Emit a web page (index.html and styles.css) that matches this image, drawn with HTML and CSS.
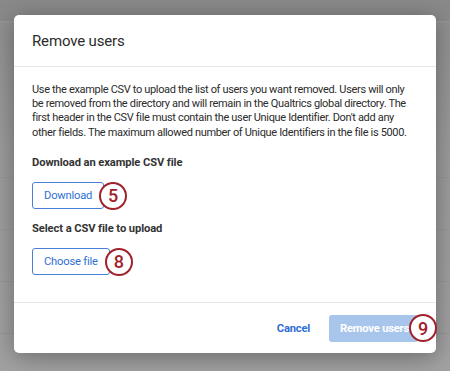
FILE: index.html
```html
<!DOCTYPE html>
<html lang="en">
<head>
    <meta charset="UTF-8">
    <meta name="viewport" content="width=device-width, initial-scale=1.0">
    <title>Remove users</title>
    <link rel="stylesheet" href="styles.css">
</head>
<body>
    <!-- Page behind the dialog -->
    <div class="backdrop">
        <div class="bg-row bg-row-top"></div>
        <div class="bg-row"></div>
        <div class="bg-row"></div>
        <div class="bg-row"></div>
        <div class="bg-row"></div>
        <div class="bg-row"></div>
        <div class="bg-row"></div>
    </div>

    <div class="overlay">
        <div class="modal">
            <div class="modal-header">
                <h1>Remove users</h1>
            </div>

            <div class="modal-body">
                <p class="intro">Use the example CSV to upload the list of users you want removed. Users will only be removed from the directory and will remain in the Qualtrics global directory. The first header in the CSV file must contain the user Unique Identifier. Don't add any other fields. The maximum allowed number of Unique Identifiers in the file is 5000.</p>

                <h2>Download an example CSV file</h2>
                <div class="action-row">
                    <button class="btn btn-outline">Download</button>
                    <span class="step">5</span>
                </div>

                <h2>Select a CSV file to upload</h2>
                <div class="action-row">
                    <button class="btn btn-outline">Choose file</button>
                    <span class="step">8</span>
                </div>
            </div>

            <div class="modal-footer">
                <button class="btn btn-link">Cancel</button>
                <div class="action-row">
                    <button class="btn btn-primary" disabled>Remove users</button>
                    <span class="step">9</span>
                </div>
            </div>
        </div>
    </div>
</body>
</html>
```

FILE: styles.css
```css
:root {
    --blue: #2f6fd6;
    --blue-border: #4a80dc;
    --blue-disabled: #a8c5ec;
    --step-red: #a1212b;
    --text: #2b2b2b;
    --divider: #e6e6e6;
}

* {
    box-sizing: border-box;
    margin: 0;
    padding: 0;
}

body {
    font-family: Roboto, 'Liberation Sans', sans-serif;
    width: 450px;
    height: 371px;
    overflow: hidden;
    position: relative;
    background-color: #a2a2a2;
}

.backdrop {
    display: flex;
    flex-direction: column;
    height: 100%;
    background: linear-gradient(to bottom, #8f8f8f 0%, #9c9c9c 40%, #a2a2a2 100%);
}

.bg-row {
    height: 52px;
    border-bottom: 1px solid #989898;
    flex-shrink: 0;
}

.bg-row-top {
    height: 22px;
    background-color: #8a8a8a;
}

.overlay {
    position: absolute;
    inset: 0;
    padding: 15px 14px 18px 14px;
}

.modal {
    background-color: #fff;
    border-radius: 5px;
    height: 338px;
    display: flex;
    flex-direction: column;
    box-shadow: 0 4px 24px rgba(0, 0, 0, 0.35);
}

.modal-header {
    height: 52px;
    padding: 0 18px;
    display: flex;
    align-items: center;
    border-bottom: 1px solid var(--divider);
}

.modal-header h1 {
    font-size: 15px;
    font-weight: 400;
    letter-spacing: -0.15px;
    color: var(--text);
    padding-top: 1px;
}

.modal-body {
    flex: 1;
    padding: 16px 18px 0 18px;
    color: var(--text);
}

.intro {
    font-size: 11px;
    line-height: 14.2px;
    letter-spacing: -0.33px;
    margin-bottom: 16px;
}

.modal-body h2 {
    font-size: 11.2px;
    font-weight: 700;
    letter-spacing: -0.1px;
    color: #333;
    margin-bottom: 13px;
}

.action-row {
    display: flex;
    align-items: center;
}

.modal-body .action-row {
    margin-bottom: 12px;
}

.btn {
    font-family: inherit;
    font-size: 11.2px;
    letter-spacing: -0.2px;
    height: 27px;
    border-radius: 3px;
    cursor: pointer;
    background: none;
    border: none;
}

.btn-outline {
    border: 1px solid var(--blue-border);
    color: var(--blue);
    background-color: #fff;
    padding: 0 11px;
}

.btn-link {
    color: var(--blue);
    font-weight: 700;
    padding: 0 8px;
    margin-right: 11px;
}

.btn-primary {
    background-color: var(--blue-disabled);
    color: #fff;
    font-weight: 700;
    padding: 0 11px;
    width: 89px;
    text-align: left;
    white-space: nowrap;
}

.step {
    width: 28px;
    height: 28px;
    border: 2.5px solid var(--step-red);
    border-radius: 50%;
    background-color: #fff;
    color: var(--step-red);
    font-size: 18px;
    font-weight: 500;
    display: flex;
    align-items: center;
    justify-content: center;
    margin-left: -5px;
    position: relative;
}

.modal-footer {
    height: 51px;
    border-top: 1px solid var(--divider);
    display: flex;
    align-items: center;
    justify-content: flex-end;
}

.modal-footer .action-row {
    margin-right: -1px;
}

.modal-footer .step {
    margin-left: -9px;
}
```
